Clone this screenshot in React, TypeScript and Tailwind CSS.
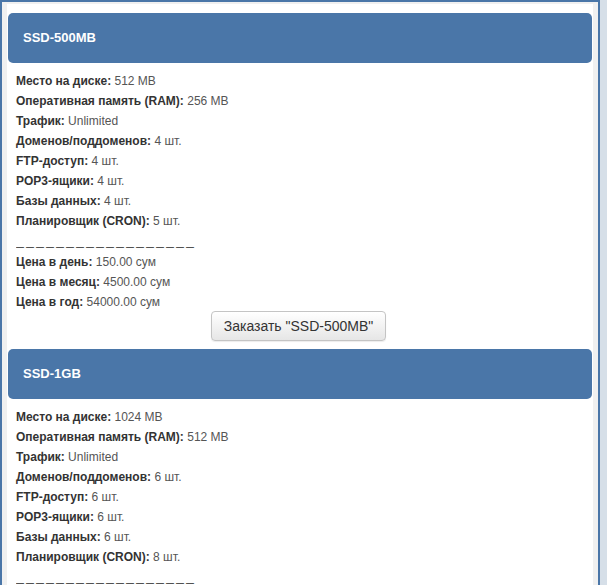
import React from "react";

type Plan = {
  name: string;
  disk: string;
  ram: string;
  count: string;
  cron: string;
  day: string;
  month: string;
  year: string;
};

const plans: Plan[] = [
  { name: "SSD-500MB", disk: "512 MB", ram: "256 MB", count: "4", cron: "5", day: "150.00", month: "4500.00", year: "54000.00" },
  { name: "SSD-1GB", disk: "1024 MB", ram: "512 MB", count: "6", cron: "8", day: "300.00", month: "9000.00", year: "108000.00" },
];

function Row({ label, value }: { label: string; value: string }) {
  return (
    <div className="h-[20px] leading-[20px] whitespace-nowrap">
      <span className="font-semibold text-[#333]">{label}:</span>{" "}
      <span className="text-[#555]">{value}</span>
    </div>
  );
}

function PlanCard({ plan }: { plan: Plan }) {
  return (
    <div>
      <div className="h-[50px] rounded-[5px] bg-[#4a76a8] px-[15px] flex items-center">
        <h3 className="text-[13px] font-bold text-white">{plan.name}</h3>
      </div>
      <div className="px-[8px] pt-[8px] text-[12px]">
        <Row label="Место на диске" value={plan.disk} />
        <Row label="Оперативная память (RAM)" value={plan.ram} />
        <Row label="Трафик" value="Unlimited" />
        <Row label="Доменов/поддоменов" value={`${plan.count} шт.`} />
        <Row label="FTP-доступ" value={`${plan.count} шт.`} />
        <Row label="POP3-ящики" value={`${plan.count} шт.`} />
        <Row label="Базы данных" value={`${plan.count} шт.`} />
        <Row label="Планировщик (CRON)" value={`${plan.cron} шт.`} />
        <div className="h-[21px] pt-[6px] leading-[20px] text-[8px] font-bold text-[#222] tracking-[2px] overflow-hidden whitespace-nowrap">
          ——————————————————
        </div>
        <Row label="Цена в день" value={`${plan.day} сум`} />
        <Row label="Цена в месяц" value={`${plan.month} сум`} />
        <Row label="Цена в год" value={`${plan.year} сум`} />
      </div>
      <div className="flex justify-center pb-[8px]">
        <button className="h-[30px] -mt-[1px] px-[12px] -ml-[3px] rounded-[4px] border border-[#c4c4c4] bg-gradient-to-b from-white to-[#e6e6e6] text-[14px] text-[#333] shadow-[0_1px_1px_rgba(0,0,0,0.08)]">
          Заказать "{plan.name}"
        </button>
      </div>
    </div>
  );
}

export default function App() {
  return (
    <div className="flex h-[585px] w-[607px] overflow-hidden font-['Liberation_Sans',Arial,sans-serif]">
      <div className="flex-1 border-l-2 border-t-2 border-[#4a76a8] bg-[#f0f0f0] pl-[5px] pr-[5px] pt-[2px]">
        <div className="bg-white px-[1px] pt-[9px] h-full">
          {plans.map((p) => (
            <PlanCard key={p.name} plan={p} />
          ))}
        </div>
      </div>
      <div className="w-[9px] border-l-2 border-[#4a76a8] bg-[#d6dfe8]" />
    </div>
  );
}
